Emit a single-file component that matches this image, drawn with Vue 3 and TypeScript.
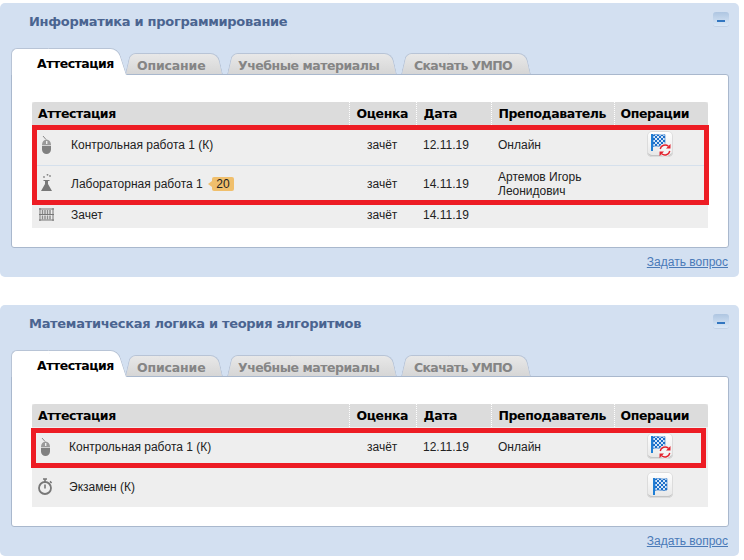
<script setup lang="ts">
type Row = {
  icon: 'mouse' | 'flask' | 'abacus' | 'timer'
  name: string
  badge?: string
  grade: string
  date: string
  teacher: string
  op?: 'retry' | 'flag'
  cls: string
}

type Panel = { title: string; rows: Row[]; wide: boolean }

const tabs = [
  { label: 'Аттестация', style: {} },
  { label: 'Описание', style: { width: '98px', paddingLeft: '12px', letterSpacing: '-0.15px' } },
  { label: 'Учебные материалы', style: { width: '170px', paddingLeft: '11px', letterSpacing: '-0.46px' } },
  { label: 'Скачать УМПО', style: { width: '130px', paddingLeft: '13px', letterSpacing: '-0.65px' } },
]

const panels: Panel[] = [
  {
    title: 'Информатика и программирование',
    wide: true,
    rows: [
      { icon: 'mouse', name: 'Контрольная работа 1 (К)', grade: 'зачёт', date: '12.11.19', teacher: 'Онлайн', op: 'retry', cls: 'r40' },
      { icon: 'flask', name: 'Лабораторная работа 1', badge: '20', grade: 'зачёт', date: '14.11.19', teacher: 'Артемов Игорь Леонидович', cls: 'r38 line' },
      { icon: 'abacus', name: 'Зачет', grade: 'зачёт', date: '14.11.19', teacher: '', cls: 'r25' },
    ],
  },
  {
    title: 'Математическая логика и теория алгоритмов',
    wide: false,
    rows: [
      { icon: 'mouse', name: 'Контрольная работа 1 (К)', grade: 'зачёт', date: '12.11.19', teacher: 'Онлайн', op: 'retry', cls: 'r40' },
      { icon: 'timer', name: 'Экзамен (К)', grade: '', date: '', teacher: '', op: 'flag', cls: 'r40' },
    ],
  },
]
</script>

<template>
  <div class="page">
    <section v-for="(p, i) in panels" :key="i" class="panel" :class="{ second: !p.wide }">
      <div class="panel-head">
        <h2>{{ p.title }}</h2>
        <span class="collapse"><i></i></span>
      </div>
      <div class="tabs">
        <span v-for="(t, n) in tabs" :key="t.label" class="tab" :class="{ active: n === 0 }" :style="t.style">{{ t.label }}</span>
      </div>
      <div class="box">
        <table :class="{ narrow: !p.wide }">
          <colgroup>
            <col style="width: 317px" /><col style="width: 67px" /><col style="width: 75px" /><col style="width: 123px" /><col style="width: 94px" />
          </colgroup>
          <thead>
            <tr><th>Аттестация</th><th>Оценка</th><th>Дата</th><th>Преподаватель</th><th>Операции</th></tr>
          </thead>
          <tbody>
            <tr v-for="(r, k) in p.rows" :key="k" :class="r.cls">
              <td>
                <div class="name">
                  <svg v-if="r.icon === 'mouse'" class="ico" viewBox="0 0 16 20" width="16" height="20">
                    <path d="M5 1 L8 4.5" stroke="#888" fill="none" />
                    <path d="M4 10a4.5 5.5 0 0 1 9 0z" fill="#9a9a9a" />
                    <path d="M4 10.8h9v3.7a4.5 4.5 0 0 1-9 0z" fill="#808080" />
                    <rect x="8" y="6" width="1.4" height="3" fill="#eee" />
                  </svg>
                  <svg v-else-if="r.icon === 'flask'" class="ico" viewBox="0 0 16 20" width="16" height="20">
                    <circle cx="9.5" cy="0.8" r="0.9" fill="#888" /><circle cx="12" cy="2" r="0.9" fill="#888" /><circle cx="6" cy="3" r="0.9" fill="#888" />
                    <path d="M5.5 6h6v1H10v3l4 7H3l4-7V7H5.5z" fill="#777" />
                  </svg>
                  <svg v-else-if="r.icon === 'abacus'" class="ico abacus" viewBox="0 0 16 13" width="16" height="13">
                    <path d="M2 0v13M15 0v13" stroke="#777" />
                    <path d="M1 1h15M1 6.5h15M1 12h15" stroke="#777" />
                    <path d="M4.5 2v4M7 2v4M9.5 2v4M12 2v4M4.5 7.5v4M7 7.5v4M9.5 7.5v4M12 7.5v4" stroke="#8c8c8c" stroke-width="1.5" />
                  </svg>
                  <svg v-else class="ico" viewBox="0 0 16 18" width="16" height="18">
                    <circle cx="8" cy="10" r="6" fill="none" stroke="#777" stroke-width="1.8" />
                    <path d="M6 1h4M8 1v3M13 3.4l1.6 1.6M8 10.5V6.5" stroke="#777" stroke-width="1.6" fill="none" />
                  </svg>
                  <span>{{ r.name }}</span>
                  <span v-if="r.badge" class="badge">{{ r.badge }}</span>
                </div>
              </td>
              <td class="pad-grade">{{ r.grade }}</td>
              <td>{{ r.date }}</td>
              <td class="teacher">{{ r.teacher }}</td>
              <td class="op-cell" :class="{ plain: r.op === 'flag' }">
                <span v-if="r.op" class="op">
                  <svg viewBox="0 0 26 26" width="26" height="26">
                    <defs>
                      <pattern :id="`chk${i}${k}`" width="4" height="4" patternUnits="userSpaceOnUse">
                        <rect width="4" height="4" fill="#1e6fc8" />
                        <rect width="2" height="2" fill="#d4e6f8" />
                        <rect x="2" y="2" width="2" height="2" fill="#d4e6f8" />
                      </pattern>
                    </defs>
                    <g :transform="r.op === 'retry' ? 'translate(4 3)' : 'translate(6 6)'">
                      <path d="M0 0h2v17H0z" fill="#1f7fd6" />
                      <path d="M2 1c4-1.4 8 1 12-0.4v11.4c-4 1.4-8-1-12 0.4z" :fill="`url(#chk${i}${k})`" stroke="#1e6fc8" stroke-width="0.6" />
                    </g>
                    <template v-if="r.op === 'retry'">
                      <circle cx="18" cy="19" r="6.5" fill="#f4f4f4" />
                      <path d="M13.2 18a5 5 0 0 1 8.2-2.8M22.8 20a5 5 0 0 1-8.2 2.8" fill="none" stroke="#e2202c" stroke-width="1.4" />
                      <path d="M23.5 13v4.5h-4.5zM12.5 25v-4.5h4.5z" fill="#e2202c" />
                    </template>
                  </svg>
                </span>
              </td>
            </tr>
          </tbody>
        </table>
      </div>
      <div class="foot"><a href="#">Задать вопрос</a></div>
    </section>
    <div class="mark mark-one"></div>
    <div class="mark mark-two"></div>
  </div>
</template>

<style>
body {
  background: #fff;
}
</style>

<style scoped>
.page {
  position: relative;
  width: 744px;
  height: 560px;
  padding-top: 3px;
  box-sizing: border-box;
  overflow: hidden;
  font-family: "Liberation Sans", Arial, sans-serif;
  font-size: 12px;
  color: #222;
}

.panel {
  width: 739px;
  height: 274px;
  box-sizing: border-box;
  background: #d3e0f1;
  border-radius: 5px;
  padding: 0 11px;
  margin-bottom: 28px;
}

.panel.second {
  height: 251px;
  margin-bottom: 0;
}

.panel-head {
  height: 44px;
  display: flex;
  justify-content: space-between;
  align-items: flex-start;
}

.panel-head h2 {
  margin: 10px 0 0 18px;
  font: bold 13px/18px "DejaVu Sans", Verdana, sans-serif;
  color: #4a6490;
  letter-spacing: -0.3px;
}

.collapse {
  width: 16px;
  height: 14px;
  margin: 9px -1px 0 0;
  border-radius: 3px;
  background: linear-gradient(#aec5e1, #dbe8f7);
  box-shadow: 0 1px 0 #c3d2e6;
  display: flex;
  align-items: flex-end;
  justify-content: center;
}

.collapse i {
  width: 8px;
  height: 2px;
  margin-bottom: 4px;
  background: #3276c0;
}

.tabs {
  height: 27px;
  display: flex;
  align-items: flex-end;
  gap: 4px;
  position: relative;
  z-index: 1;
}

.tab {
  position: relative;
  isolation: isolate;
  height: 21px;
  box-sizing: border-box;
  padding-top: 4px;
  font: bold 12.5px/18px "DejaVu Sans", Verdana, sans-serif;
  color: #858585;
  white-space: nowrap;
}

.tab::before,
.tab::after {
  content: "";
  position: absolute;
  z-index: -1;
  top: 0;
  bottom: 0;
  width: 60%;
  box-sizing: border-box;
  border: 1px solid #b8c4d6;
  border-bottom: 0;
  background: linear-gradient(#e8e8e8, #d6d6d6);
  transform-origin: bottom;
}

.tab::before {
  left: 0;
  border-right: 0;
  border-radius: 6px 0 0 0;
  transform: skewX(-13deg);
}

.tab::after {
  right: 0;
  border-left: 0;
  border-radius: 0 8px 0 0;
  transform: skewX(13deg);
}

.tab.active {
  z-index: 1;
  width: 116px;
  height: 27px;
  margin-bottom: -1px;
  margin-right: -6px;
  padding: 7px 0 0 26px;
  color: #000;
  letter-spacing: -0.5px;
}

.tab.active::before,
.tab.active::after {
  background: #fff;
}

.tab.active::before {
  transform: none;
}

.tab.active::after {
  transform: skewX(18deg);
}

.box {
  height: 174px;
  box-sizing: border-box;
  width: 718px;
  background: #fff;
  border: 1px solid #a9b8cd;
  border-radius: 0 3px 3px 3px;
  padding: 27px 20px 0;
}

.second .box {
  height: 151px;
}

table {
  width: 676px;
  table-layout: fixed;
  border-collapse: collapse;
  background: #eee;
}

th {
  height: 23px;
  padding: 0 0 0 7px;
  background: #dcdcdc;
  text-align: left;
  font: bold 12.5px/14px "DejaVu Sans", Verdana, sans-serif;
  letter-spacing: -0.4px;
  color: #000;
  border-left: 1px dotted #fff;
}

th:first-child {
  padding-left: 6px;
  border-left: 0;
  border-radius: 3px 0 0 0;
}

th:last-child {
  padding-left: 6px;
  border-radius: 0 3px 0 0;
}

td {
  padding: 0 0 0 7px;
  box-sizing: border-box;
  vertical-align: middle;
  line-height: 14px;
}

.pad-grade {
  padding-left: 18px;
}

.r40 td {
  height: 40px;
}

.r38 td {
  height: 38px;
}

.r25 td {
  height: 25px;
  padding-bottom: 2px;
}

.line td {
  box-shadow: inset 0 1px 0 #d5e0ec;
}

.name {
  display: flex;
  align-items: center;
}

.ico {
  flex: none;
  margin-left: -1px;
  margin-right: 17px;
}

.narrow .ico {
  margin-left: -2px;
  margin-right: 16px;
}

.badge {
  position: relative;
  margin-left: 9px;
  padding: 0 4.5px;
  height: 14px;
  line-height: 14px;
  background: #f0bf6c;
  border-radius: 2px;
}

.badge::before {
  content: "";
  position: absolute;
  left: -4px;
  top: 4px;
  border: 3px solid transparent;
  border-left: 0;
  border-right: 4px solid #f0bf6c;
}

.teacher {
  padding-right: 10px;
}

.op-cell {
  padding-bottom: 2px;
}

.op-cell.plain {
  padding-bottom: 4px;
}

.op {
  width: 26px;
  height: 26px;
  margin-left: 26px;
  box-sizing: border-box;
  display: block;
  border-radius: 5px;
  box-shadow: inset 0 0 0 1px #dcdcdc, inset 0 -2px 0 #c4c4c4;
  background: linear-gradient(#fff, #e6e6e6);
}

.op svg {
  display: block;
}

.foot {
  height: 28px;
  text-align: right;
  line-height: 29px;
}

.foot a {
  color: #4a7ab8;
  text-decoration: underline;
}

.mark {
  position: absolute;
  box-sizing: border-box;
  border: 5px solid #ed1c24;
}

.mark-one {
  left: 32px;
  top: 125px;
  width: 677px;
  height: 80px;
}

.mark-two {
  left: 31px;
  top: 428px;
  width: 675px;
  height: 40px;
}
</style>
